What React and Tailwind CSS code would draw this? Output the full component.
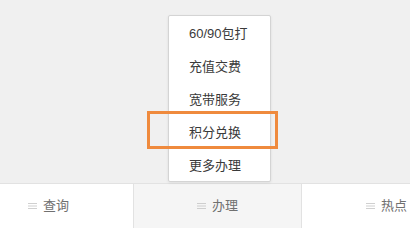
import React from 'react';

const items = ['60/90包打', '充值交费', '宽带服务', '积分兑换', '更多办理'];
const tabs = [
  { label: '查询', active: false },
  { label: '办理', active: true },
  { label: '热点', active: false },
];

const MenuIcon = () => (
  <svg width="9" height="8" viewBox="0 0 9 8" className="mr-[6px]">
    <path d="M0 1.5h9M0 4h9M0 6.5h9" stroke="#c4c4c4" strokeWidth="0.8" />
  </svg>
);

const App = () => {
  return (
    <div
      className="w-[410px] h-[228px] bg-[#f0f0f0] flex flex-col overflow-hidden"
      style={{ fontFamily: '"Liberation Sans", "Noto Sans CJK SC", sans-serif' }}
    >
      <div className="flex-1 relative">
        {/* Popup menu */}
        <div className="absolute left-[168px] top-[15px] w-[103px] bg-white border border-[#d4d4d4] rounded-[2px] shadow-[0_1px_3px_rgba(0,0,0,0.08)]">
          {items.map((item) => (
            <div key={item} className="h-[33px] flex items-center pl-[20px] pt-[2px] text-[13px] text-[#3a3a3a]">
              {item}
            </div>
          ))}
        </div>
        {/* Highlight frame */}
        <div className="absolute left-[147px] top-[111px] w-[131px] h-[38px] border-[3px] border-[#ef8a3d]" />
      </div>
      <div className="h-[45px] border-t border-[#e2e2e2] bg-white overflow-hidden">
        <div className="flex h-full w-[507px] -ml-[36px]">
          {tabs.map((tab) => (
            <div
              key={tab.label}
              className={
                'w-[169px] h-full flex items-center justify-center text-[13px] text-[#707070] ' +
                (tab.active ? 'bg-[#f5f5f5] border-l border-r border-[#e2e2e2]' : 'bg-white')
              }
            >
              <MenuIcon />
              {tab.label}
            </div>
          ))}
        </div>
      </div>
    </div>
  );
};

export default App;
